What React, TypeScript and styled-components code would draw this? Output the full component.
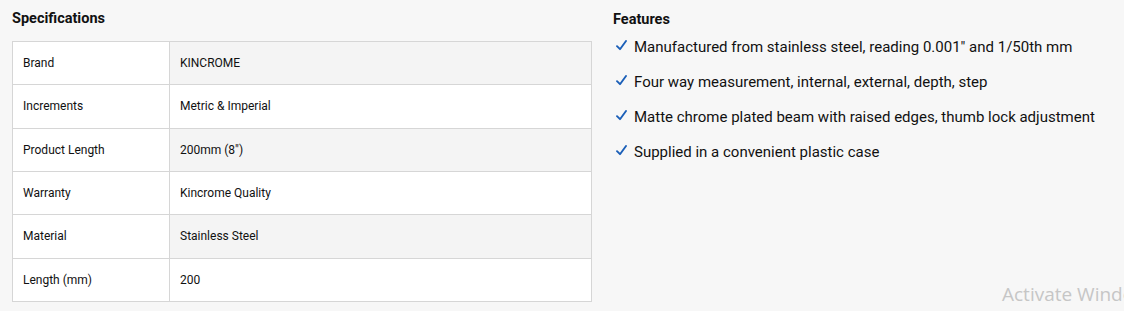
import React from "react";
import styled, { createGlobalStyle } from "styled-components";

const Global = createGlobalStyle`
  html, body { margin: 0; padding: 0; background: #f7f7f7; }
  body { font-family: Roboto, "Liberation Sans", sans-serif; color: #111; }
`;

const Page = styled.div`
  display: flex;
  align-items: flex-start;
  gap: 21px;
  padding: 10px 0 0 12px;
  height: 311px;
  box-sizing: border-box;
  position: relative;
  overflow: hidden;
`;

const SpecColumn = styled.section`
  width: 580px;
  flex: none;
`;

const Heading = styled.h2`
  margin: 0;
  font-size: 14.5px;
  font-weight: 700;
  line-height: 18px;
  color: #111;
`;

const SpecHeading = styled(Heading)`
  margin-bottom: 13px;
`;

const Table = styled.table`
  width: 580px;
  border-collapse: collapse;
  table-layout: fixed;
  font-size: 12px;
  border: 1px solid #d6d6d6;
`;

const Row = styled.tr``;

const Label = styled.td`
  width: 146px;
  height: 42.33px;
  padding: 0 0 0 10px;
  border: 1px solid #d6d6d6;
  background: #fff;
  vertical-align: middle;
`;

const Value = styled.td<{ $shaded: boolean }>`
  height: 42.33px;
  padding: 0 0 0 10px;
  border: 1px solid #d6d6d6;
  background: ${(p) => (p.$shaded ? "#f4f4f4" : "#fff")};
  vertical-align: middle;
`;

const FeatureColumn = styled.section`
  flex: 1;
  padding-top: 1px;
`;

const List = styled.ul`
  list-style: none;
  margin: 0;
  padding: 0 0 0 3px;
`;

const Item = styled.li`
  display: flex;
  align-items: center;
  gap: 7px;
  height: 35px;
  font-size: 15px;
`;

const Check = styled.svg`
  width: 11px;
  height: 11px;
  flex: none;
  margin-top: -2px;
`;

const Watermark = styled.div`
  position: absolute;
  left: 1002px;
  top: 281px;
  font-family: "Open Sans", "Liberation Sans", sans-serif;
  font-size: 19px;
  line-height: normal;
  color: #c6c6c6;
  white-space: nowrap;
`;

const specs: [string, string][] = [
  ["Brand", "KINCROME"],
  ["Increments", "Metric & Imperial"],
  ["Product Length", "200mm (8\")"],
  ["Warranty", "Kincrome Quality"],
  ["Material", "Stainless Steel"],
  ["Length (mm)", "200"],
];

const features = [
  "Manufactured from stainless steel, reading 0.001\" and 1/50th mm",
  "Four way measurement, internal, external, depth, step",
  "Matte chrome plated beam with raised edges, thumb lock adjustment",
  "Supplied in a convenient plastic case",
];

export default function App() {
  return (
    <>
      <Global />
      <Page>
        <SpecColumn>
          <SpecHeading>Specifications</SpecHeading>
          <Table>
            <tbody>
              {specs.map(([k, v], i) => (
                <Row key={k}>
                  <Label>{k}</Label>
                  <Value $shaded={i % 2 === 0}>{v}</Value>
                </Row>
              ))}
            </tbody>
          </Table>
        </SpecColumn>
        <FeatureColumn>
          <Heading>Features</Heading>
          <List>
            {features.map((f) => (
              <Item key={f}>
                <Check viewBox="0 0 11 11" aria-hidden="true">
                  <path
                    d="M1 6.2 L4 9.2 L10 1"
                    fill="none"
                    stroke="#1b5fb8"
                    strokeWidth="1.9"
                    strokeLinecap="round"
                    strokeLinejoin="round"
                  />
                </Check>
                <span>{f}</span>
              </Item>
            ))}
          </List>
        </FeatureColumn>
        <Watermark>Activate Windows</Watermark>
      </Page>
    </>
  );
}
